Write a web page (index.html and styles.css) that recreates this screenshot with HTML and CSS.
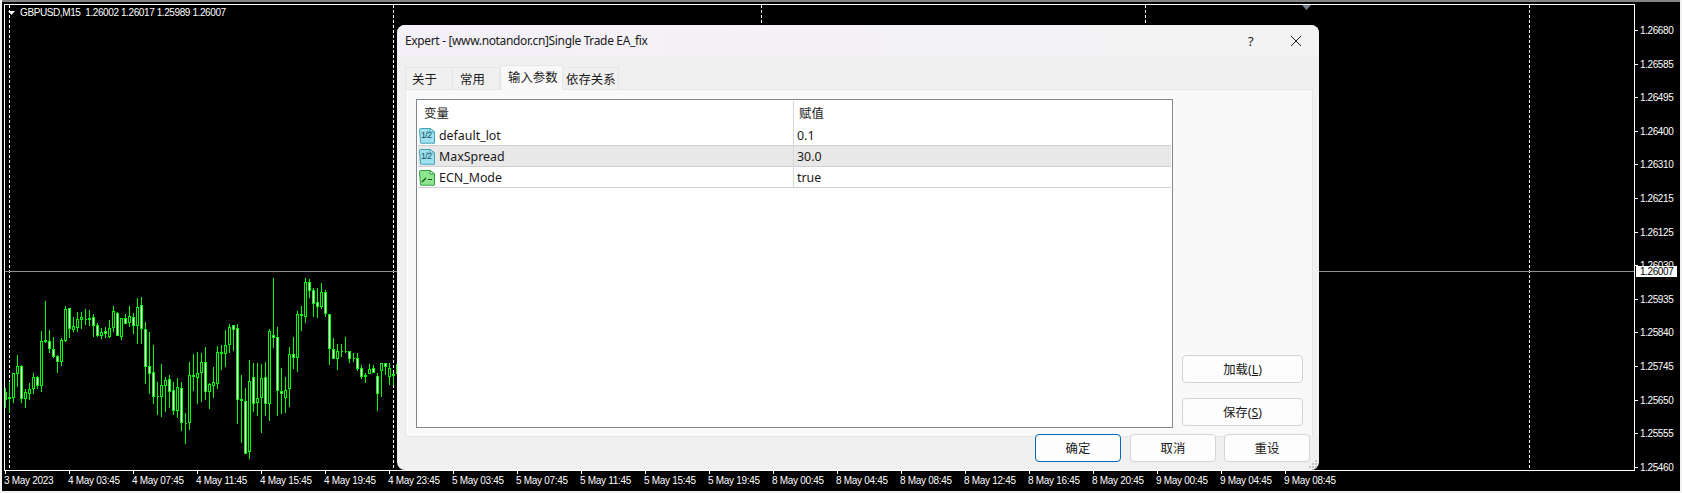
FILE: index.html
```html
<!DOCTYPE html>
<html lang="zh">
<head>
<meta charset="utf-8">
<title>Expert - Single Trade EA_fix</title>
<link rel="stylesheet" href="styles.css">
</head>
<body>
<div class="terminal">
  <div class="chart-row">
    <div class="plot">
      <svg class="plot-svg" id="plot" viewBox="5 5 1629 465" width="1629" height="465">
        <g class="grid">
          <line x1="9.5" y1="5" x2="9.5" y2="470"/>
          <line x1="393.5" y1="5" x2="393.5" y2="470"/>
          <line x1="761.5" y1="5" x2="761.5" y2="470"/>
          <line x1="1145.5" y1="5" x2="1145.5" y2="470"/>
          <line x1="1529.5" y1="5" x2="1529.5" y2="470"/>
        </g>
        <path class="bid" d="M5 271.5H1634"/>
        <path class="wicks" id="wicks"/>
        <path class="bodies" id="hollow"/>
        <path class="bodies solid" id="solid"/>
        <path class="marker" d="M8 11h7l-3.5 4z"/>
        <path class="shift" d="M1302 5h9l-4.500 5z"/>
      </svg>
      <div class="symbol">GBPUSD,M15&nbsp; 1.26002 1.26017 1.25989 1.26007</div>
    </div>
    <div class="prices">
      <div class="price">1.26680</div>
      <div class="price">1.26585</div>
      <div class="price">1.26495</div>
      <div class="price">1.26400</div>
      <div class="price">1.26310</div>
      <div class="price">1.26215</div>
      <div class="price">1.26125</div>
      <div class="price">1.26030</div>
      <div class="price">1.25935</div>
      <div class="price">1.25840</div>
      <div class="price">1.25745</div>
      <div class="price">1.25650</div>
      <div class="price">1.25555</div>
      <div class="price">1.25460</div>
      <div class="current-price">1.26007</div>
    </div>
  </div>
  <div class="times">
    <div class="time">3 May 2023</div>
    <div class="time">4 May 03:45</div>
    <div class="time">4 May 07:45</div>
    <div class="time">4 May 11:45</div>
    <div class="time">4 May 15:45</div>
    <div class="time">4 May 19:45</div>
    <div class="time">4 May 23:45</div>
    <div class="time">5 May 03:45</div>
    <div class="time">5 May 07:45</div>
    <div class="time">5 May 11:45</div>
    <div class="time">5 May 15:45</div>
    <div class="time">5 May 19:45</div>
    <div class="time">8 May 00:45</div>
    <div class="time">8 May 04:45</div>
    <div class="time">8 May 08:45</div>
    <div class="time">8 May 12:45</div>
    <div class="time">8 May 16:45</div>
    <div class="time">8 May 20:45</div>
    <div class="time">9 May 00:45</div>
    <div class="time">9 May 04:45</div>
    <div class="time">9 May 08:45</div>
  </div>
</div>

<div class="dialog">
  <div class="titlebar">
    <span class="title">Expert - [www.notandor.cn]Single Trade EA_fix</span>
    <span class="help">?</span>
    <svg class="close" viewBox="0 0 12 12" width="12" height="12"><path d="M1 1l10 10M11 1L1 11"/></svg>
  </div>
  <div class="tabs">
    <div class="tab tab-about">关于</div>
    <div class="tab tab-common">常用</div>
    <div class="tab active">输入参数</div>
    <div class="tab tab-last">依存关系</div>
  </div>
  <div class="panel">
    <div class="table">
      <div class="row head"><div class="cell name">变量</div><div class="cell value">赋值</div></div>
      <div class="row">
        <div class="cell name">
          <svg class="icon" viewBox="0 0 16 16" width="16" height="16"><path class="page-blue" d="M.5 1.500Q.5.500 1.500.500H11L15.500 4V15l-1.500.500-1.500-.500-1.500.500-1.500-.500-1.500.500-1.500-.500-1.500.500-1.500-.500-1.500.500-.500-.500z"/><path class="fold-blue" d="M11 .500V4h4.500z"/><text class="frac" x="2" y="10">1/2</text></svg>
          default_lot
        </div>
        <div class="cell value">0.1</div>
      </div>
      <div class="row selected">
        <div class="cell name">
          <svg class="icon" viewBox="0 0 16 16" width="16" height="16"><path class="page-blue" d="M.5 1.500Q.5.500 1.500.500H11L15.500 4V15l-1.500.500-1.500-.500-1.500.500-1.500-.500-1.500.500-1.500-.500-1.500.500-1.500-.500-1.500.500-.500-.500z"/><path class="fold-blue" d="M11 .500V4h4.500z"/><text class="frac" x="2" y="10">1/2</text></svg>
          MaxSpread
        </div>
        <div class="cell value">30.0</div>
      </div>
      <div class="row">
        <div class="cell name">
          <svg class="icon" viewBox="0 0 16 16" width="16" height="16"><path class="page-green" d="M.5 1.500Q.5.500 1.500.500H11L15.500 4V15l-1.500.500-1.500-.500-1.500.500-1.500-.500-1.500.500-1.500-.500-1.500.500-1.500-.500-1.500.500-.500-.500z"/><path class="fold-green" d="M11 .500V4h4.500z"/><path class="step" d="M3 12l4-4M9 9.500h4"/></svg>
          ECN_Mode
        </div>
        <div class="cell value">true</div>
      </div>
    </div>
    <div class="side">
      <button class="btn side-btn">加载(<u>L</u>)</button>
      <button class="btn side-btn">保存(<u>S</u>)</button>
    </div>
  </div>
  <div class="footer">
    <button class="btn foot-btn primary">确定</button>
    <button class="btn foot-btn">取消</button>
    <button class="btn foot-btn">重设</button>
  </div>
  <svg class="grip" viewBox="0 0 8 8" width="8" height="8"><path d="M6 0h2v2H6zM3 3h2v2H3zM6 3h2v2H6zM0 6h2v2H0zM3 6h2v2H3zM6 6h2v2H6z"/></svg>
</div>
<script src="chart.js"></script>
</body>
</html>
```
FILE: styles.css
```css
* { box-sizing: border-box; }
html, body { margin: 0; padding: 0; }
body {
  width: 1682px;
  height: 493px;
  overflow: hidden;
  background: #f2f2f2;
  position: relative;
}
.terminal {
  width: 1678px;
  height: 489px;
  margin: 2px 0 0 2px;
  padding: 2px 0 0 2px;
  background: #000;
  box-shadow: 0 -2px 0 #858585;
  color: #fff;
  font-family: "Liberation Sans", Arial, sans-serif;
  font-size: 10px;
  letter-spacing: -0.4px;
}
.chart-row { display: flex; height: 467px; }
.plot {
  position: relative;
  width: 1631px;
  height: 467px;
  border: 1px solid #fff;
}
.plot-svg { display: block; }
.grid line { stroke: #fff; stroke-width: 1; stroke-dasharray: 3 2; shape-rendering: crispEdges; }
.bid { stroke: #8a9299; stroke-width: 1; fill: none; shape-rendering: crispEdges; }
.wicks { stroke: #0f0; stroke-width: 1; fill: none; shape-rendering: crispEdges; }
.bodies { stroke: #0f0; stroke-width: 1; fill: #000; shape-rendering: crispEdges; }
.bodies.solid { fill: #fff; }
.marker { fill: #fff; }
.shift { fill: #708090; }
.symbol {
  position: absolute;
  left: 15px;
  top: 2px;
  font-size: 10px;
  line-height: 12px;
  white-space: nowrap;
}
.prices {
  position: relative;
  width: 46px;
  padding-top: 10px;
}
.price {
  position: relative;
  height: 33.6px;
  line-height: 33.6px;
  padding-left: 5px;
}
.price::before {
  content: "";
  position: absolute;
  left: 0;
  top: 16px;
  width: 3px;
  height: 1px;
  background: #fff;
}
.current-price {
  position: absolute;
  left: 1px;
  top: 262px;
  width: 41px;
  height: 11px;
  background: #fff;
  color: #000;
  line-height: 11px;
  padding-left: 4px;
}
.times { display: flex; padding-left: 1px; }
.time {
  position: relative;
  flex: 0 0 64px;
  padding: 4px 0 0 0;
  text-indent: -1px;
  line-height: 12px;
  letter-spacing: -0.3px;
  white-space: nowrap;
}
.time::before {
  content: "";
  position: absolute;
  left: 0;
  top: 0;
  width: 1px;
  height: 3px;
  background: #fff;
}

.dialog {
  position: absolute;
  left: 397px;
  top: 25px;
  width: 922px;
  height: 445px;
  border-radius: 8px;
  background: #f0f0f0;
  overflow: hidden;
  font-family: "Noto Sans", "Noto Sans CJK SC", sans-serif;
  font-size: 12.4px;
  color: #1a1a1a;
}
.titlebar {
  display: flex;
  align-items: center;
  height: 31px;
  padding: 0 17px 0 8px;
  background: linear-gradient(90deg, #f4f0f8, #f3f3f3);
}
.title { flex: 1; font-size: 12px; letter-spacing: -0.35px; }
.help { width: 42px; font-size: 13px; }
.close { display: block; }
.close path { stroke: #1a1a1a; stroke-width: 1; fill: none; }
.tabs {
  display: flex;
  align-items: flex-end;
  height: 33px;
  padding-left: 8px;
}
.tab {
  height: 22px;
  line-height: 23px;
  background: #f0f0f0;
  border: 1px solid #e6e6e6;
  border-bottom: 0;
}
.tab-about { width: 48px; padding-left: 6px; }
.tab-common { width: 47px; padding-left: 7px; border-left: 0; }
.tab.active {
  width: 63px;
  height: 25px;
  padding-left: 7px;
  line-height: 24px;
  background: #f9f9f9;
  position: relative;
  top: 1px;
}
.tab.tab-last { width: 56px; padding-left: 3px; border-left: 0; }
.panel {
  display: flex;
  width: 908px;
  height: 348px;
  margin-left: 8px;
  padding: 9px 0 0 10px;
  background: #f9f9f9;
  border: 1px solid #e6e6e6;
}
.table {
  width: 757px;
  height: 329px;
  padding: 1px;
  background: #fff;
  border: 1px solid #808890;
}
.row {
  display: grid;
  grid-template-columns: 375px 1fr;
  height: 21px;
  border-bottom: 1px solid #d0d0d0;
  line-height: 20px;
}
.row.head { height: 24px; line-height: 23px; border-bottom: 0; }
.row.selected { background: #e8e8e8; }
.cell { display: flex; align-items: center; padding-top: 1px; white-space: nowrap; }
.cell.name { padding-left: 1px; gap: 4px; }
.row.head .cell { padding-top: 0; }
.row.head .cell.name { padding-left: 6px; }
.cell.value { padding-left: 3px; border-left: 1px solid #d8d8d8; }
.row.head .cell.value { padding-left: 5px; }
.icon { display: block; flex: none; }
.page-blue { fill: #9fe0ee; stroke: #3fa3ba; }
.fold-blue { fill: #e6f8fb; stroke: #3fa3ba; }
.page-green { fill: #8ee58e; stroke: #2f9e44; }
.fold-green { fill: #e6fae6; stroke: #2f9e44; }
.step { fill: none; stroke: #14501e; stroke-width: 1.2; }
.frac { font-family: "Liberation Sans", sans-serif; font-size: 9px; letter-spacing: -0.8px; fill: #14505f; }
.side {
  flex: 1;
  display: flex;
  flex-direction: column;
  align-items: flex-start;
  gap: 15px;
  justify-content: flex-end;
  padding: 0 0 10px 9px;
}
.btn {
  display: block;
  height: 28px;
  padding: 0;
  background: #fdfdfd;
  border: 1px solid #d3d3d3;
  border-radius: 4px;
  font: inherit;
  color: inherit;
}
.side-btn { width: 121px; }
.footer {
  display: flex;
  justify-content: flex-end;
  gap: 8px;
  margin-top: -3px;
  padding-right: 9px;
}
.foot-btn { width: 86px; }
.primary { border-color: #0067c0; margin-right: 1px; }
.grip {
  position: absolute;
  right: 2px;
  bottom: 2px;
}
.grip path { fill: #c4c4c4; }
```
FILE: chart.js
```js
var candles = [
[355,365,390,415,1],[335,382,386,430,0],[310,310,383,400,0],[255,289,311,350,0],[285,289,386,398,1],[358,365,386,413,0],[340,356,371,390,0],[310,322,356,372,0],[318,322,349,358,1],[183,214,347,365,0],
[93,211,215,218,0],[180,214,236,249,1],[202,238,261,264,1],[255,259,275,308,1],[205,211,275,288,0],[108,118,212,215,0],[113,115,177,205,1],[140,169,179,186,0],[125,148,173,185,0],[125,142,149,177,0],
[117,148,150,165,0],[120,145,151,168,0],[132,142,168,200,1],[160,166,198,200,1],[175,187,198,208,0],[170,184,191,203,1],[150,175,200,204,0],[108,124,173,185,0],[125,128,197,198,1],[143,145,200,210,0],
[132,145,161,163,1],[108,139,158,171,0],[130,142,167,192,1],[84,112,167,222,0],[82,106,176,222,1],[155,178,290,342,1],[186,287,311,372,1],[225,307,380,402,1],[336,379,380,435,0],[282,346,380,441,0],
[322,331,347,426,0],[315,328,365,414,1],[336,361,422,435,1],[324,352,422,443,0],[335,355,460,483,1],[430,458,461,521,0],[277,316,458,480,0],[252,316,320,363,1],[246,310,323,402,0],
[248,277,308,396,0],[230,277,365,390,1],[340,343,365,417,0],[291,337,347,385,0],[229,247,341,357,0],[225,247,251,300,0],[180,226,251,290,0],[163,172,225,249,0],[165,166,179,243,1],[163,175,391,462,1],
[315,388,392,519,0],[354,394,551,551,1],[270,334,545,567,0],[279,322,401,426,1],[279,385,399,437,0],[282,325,383,489,0],[276,322,401,438,1],[178,184,401,453,0],[25,196,203,233,1],[171,202,362,437,1],
[293,364,371,432,1],[321,361,383,429,0],[232,253,358,411,0],[201,253,263,297,1],[123,133,263,305,0],[108,133,137,183,0],[25,37,140,158,0],[27,37,62,84,1],[55,61,101,140,1],[55,97,111,143,1],
[40,67,110,118,0],[60,65,131,140,1],[133,133,236,285,1],[205,238,266,268,1],[222,244,266,300,0],[222,243,246,262,0],[202,243,246,248,0],[243,244,266,280,1],[250,264,267,276,0],[249,265,296,303,1],
[285,295,320,327,1],[310,316,320,339,0],[283,298,311,313,0],[285,295,308,310,1],[310,319,371,423,1],[279,280,303,381,0],[279,280,290,316,1],[279,295,320,345,0],[310,311,317,345,0],[282,282,311,320,0]
];
function py(z) { return Math.round(270 + z / 3); }
var wicks = "", hollow = "", solid = "";
candles.forEach(function (c, i) {
  var x = 5 + 4 * i;
  wicks += "M" + (x + 0.5) + " " + py(c[0]) + "V" + py(c[3]);
  var top = py(c[1]) + 0.5;
  var h = Math.max(py(c[2]) - py(c[1]) - 1, 0);
  var left = i === 0 ? x + 0.5 : x - 0.5;
  var w = i === 0 ? 1 : 2;
  var body = "M" + left + " " + top + "h" + w + "v" + h + "h-" + w + "z";
  if (c[4]) { solid += body; } else { hollow += body; }
});
document.getElementById("wicks").setAttribute("d", wicks);
document.getElementById("hollow").setAttribute("d", hollow);
document.getElementById("solid").setAttribute("d", solid);
```
